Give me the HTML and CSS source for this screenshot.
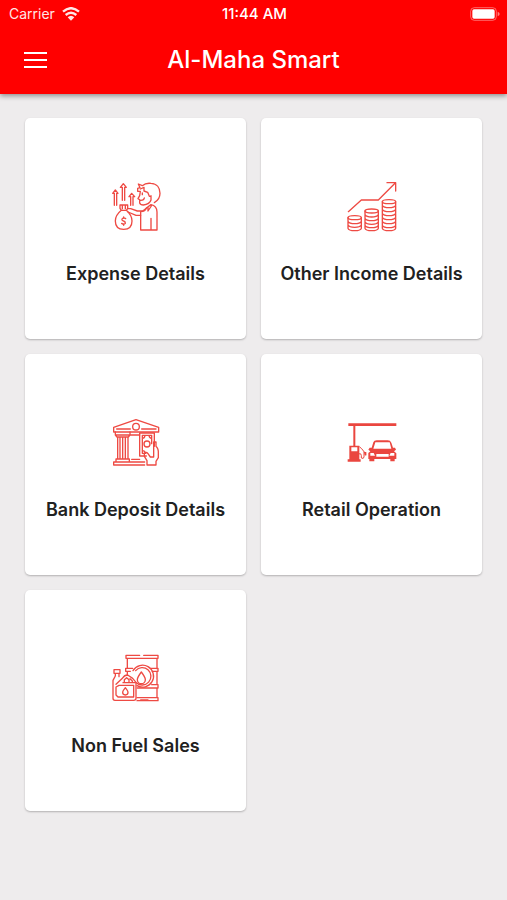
FILE: index.html
```html
<!DOCTYPE html>
<html lang="en">
<head>
<meta charset="utf-8">
<meta name="viewport" content="width=device-width, initial-scale=1">
<title>Al-Maha Smart</title>
<link rel="stylesheet" href="styles.css">
</head>
<body>
<header class="header">
  <div class="status">
    <div class="carrier">
      <span>Carrier</span>
      <svg class="wifi" viewBox="0 0 54 42" aria-hidden="true">
        <path d="M3 14Q27-7 51 14M11 24Q27 10 43 24" fill="none" stroke="currentColor" stroke-width="7"/>
        <path d="M17 31Q27 22 37 31L27 41Z" fill="currentColor"/>
      </svg>
    </div>
    <time class="clock">11:44 AM</time>
    <svg class="battery" viewBox="0 0 90 42" aria-hidden="true">
      <rect x="2" y="2" width="77" height="38" rx="11" fill="none" stroke="currentColor" stroke-width="3" opacity=".4"/>
      <rect x="7" y="7" width="67" height="28" rx="5" fill="currentColor"/>
      <path d="M83 14Q89 17 89 21T83 28Z" fill="currentColor" opacity=".5"/>
    </svg>
  </div>
  <div class="appbar">
    <button class="menu" type="button" aria-label="Menu">
      <svg viewBox="0 0 24 16" aria-hidden="true"><path d="M0 1H23M0 8H23M0 15H23" stroke="currentColor" stroke-width="2"/></svg>
    </button>
    <h1 class="title">Al-Maha Smart</h1>
  </div>
</header>
<main class="grid">
  <a class="card" href="#expense">
    <svg class="icon" viewBox="3 0 210 210" aria-hidden="true">
      <path d="M43 106V70H38L46 60L54 70H50V106M67 91V52H61L70 41L79 52H74V91M92 106V80H87L95 70L104 80H99V106"/>
      <path d="M60 105H83V115L79 121H64L60 115ZM64 121C53 130 46 139 46 153C46 170 56 178 71 178S96 170 96 153C96 140 88 129 79 121M67 106V116M76 106V116M77 146Q70 141 66 147Q65 152 71 153Q77 155 76 160Q72 165 65 160M71 141V145M71 162V166"/>
      <path d="M83 116H92L112 123H128L140 114M84 126L108 136H122"/>
      <path d="M122 180V125Q136 124 139 114L153 104Q171 108 171 126V180ZM153 180V145M122 180H171M144 111V123L154 108"/>
      <path d="M121 64H113V55L120 53L115 42L127 47Q137 38 153 40C171 41 180 54 180 70C180 84 174 92 163 98M121 64L119 77L114 86L119 89V99Q121 105 130 105Q149 103 153 90V77M121 57L132 52V63L143 67L148 79H153M120 91Q132 92 133 84M127 69V74"/>
    </svg>
    <span class="label">Expense Details</span>
  </a>
  <a class="card" href="#income">
    <svg class="icon" viewBox="3 0 210 210" aria-hidden="true">
      <path d="M37 125L76 90H127L177 40M153 38H179V63"/>
      <ellipse cx="56" cy="143" rx="20" ry="6"/>
      <path d="M36 143V175Q38 182 56 182T76 175V143M36 154Q40 161 56 161T76 154M36 165Q40 172 56 172T76 165"/>
      <ellipse cx="107" cy="123" rx="20" ry="6"/>
      <path d="M87 123V175Q89 182 107 182T127 175V123M87 134Q91 141 107 141T127 134M87 145Q91 152 107 152T127 145M87 156Q91 163 107 163T127 156M87 166Q91 173 107 173T127 166"/>
      <ellipse cx="159" cy="95" rx="20" ry="6"/>
      <path d="M139 95V175Q141 182 159 182T179 175V95M139 106Q143 113 159 113T179 106M139 118Q143 125 159 125T179 118M139 130Q143 137 159 137T179 130M139 142Q143 149 159 149T179 142M139 154Q143 161 159 161T179 154M139 166Q143 173 159 173T179 166"/>
    </svg>
    <span class="label">Other Income Details</span>
  </a>
  <a class="card" href="#deposit">
    <svg class="icon" viewBox="3 0 210 210" aria-hidden="true">
      <path d="M41 64L108 41L176 64V78H41ZM50 69H91M125 69H168"/>
      <circle cx="108" cy="62" r="10" fill="#fff"/>
      <path d="M46 78V87H90V78M46 87L51 93H85L90 87M53 94V158M60 94V158M68 94V158M76 94V158M84 94V158M48 159H88V168H48ZM41 177V168H134M41 177H134M88 87H119M95 160H119"/>
      <path d="M119 81H163V121M119 81V150H139M127 88H155V113M127 88V142H137M127 97Q134 97 135 88M147 88Q148 96 155 97M127 134Q135 134 136 142"/>
      <circle cx="141" cy="114" r="9"/>
      <path d="M141 177V164L133 151V143Q138 136 144 143L151 153H161V108H168V121Q176 128 175 143V155L168 166V177Z"/>
    </svg>
    <span class="label">Bank Deposit Details</span>
  </a>
  <a class="card" href="#retail">
    <svg class="icon solid" viewBox="3 0 210 210" aria-hidden="true">
      <path d="M37 52H181V60H58V120H52V60H37Z"/>
      <path fill-rule="evenodd" d="M40 119H70V160H74V167H35V160H40ZM46 124V136H64V124Z"/>
      <path class="line" d="M70 143Q76 141 76 149V156Q83 160 84 153V137L77 128L71 123M84 138L89 142V147"/>
      <path d="M84 138H91V148H86Z"/>
      <path fill-rule="evenodd" d="M112 109Q114 103 122 103H155Q163 103 166 110L171 125H177L180 131L174 136L181 142V159H176V166H163V159H115V166H100V159H97V141L103 136L97 131L101 125H107ZM118 109L112 128H166L161 109ZM103 141V149H117L113 141ZM121 144V152H158V144ZM164 141L160 149H175V141Z"/>
    </svg>
    <span class="label">Retail Operation</span>
  </a>
  <a class="card" href="#nonfuel">
    <svg class="icon" viewBox="3 0 210 210" aria-hidden="true">
      <path d="M119 40H78V49H174V40H131M82 49V79M171 49V80M77 79H98M153 79H174V88H157M77 79V88H91M82 88V99M171 88V128M155 128H174V138H112M171 138V167M111 167H174V176H111M122 174H144"/>
      <path d="M99 86A33 33 0 1 1 111 131M107 86A26 26 0 1 1 109 122"/>
      <path d="M124 90Q112 106 112 113A12 12 0 0 0 136 113Q136 106 124 90Z"/>
      <path d="M42 83H60V94H42ZM46 94V102M57 94V104M46 102L39 115V169Q39 175 45 175H101Q108 175 108 169V121L98 109L83 99Q73 99 68 108L48 127M73 122V113L80 107L87 113V122M90 110L97 117V122M69 122H104M48 135L57 130H101V165H54L48 159ZM48 144V159M61 175H86"/>
      <path d="M76 137Q68 147 68 151A8 8 0 0 0 84 151Q84 147 76 137Z"/>
    </svg>
    <span class="label">Non Fuel Sales</span>
  </a>
</main>
</body>
</html>
```
FILE: styles.css
```css
* {
  box-sizing: border-box;
}

body {
  margin: 0;
  min-height: 100vh;
  background: #eeeced;
  color: #212121;
  font-family: Inter, "Liberation Sans", sans-serif;
}

.header {
  position: relative;
  background: #ff0000;
  color: #fff;
  box-shadow: 0 2px 5px rgba(0, 0, 0, 0.4);
}

.status {
  display: grid;
  grid-template-columns: 1fr auto 1fr;
  align-items: center;
  height: 27px;
  padding: 0 7px 0 9px;
  font-size: 14px;
  line-height: 16px;
}

.carrier {
  display: flex;
  align-items: center;
  gap: 7px;
  opacity: 0.9;
}

.wifi {
  width: 18px;
  height: 14px;
}

.clock {
  font-size: 15px;
  font-weight: 500;
}

.battery {
  width: 30px;
  height: 14px;
  justify-self: end;
}

.appbar {
  display: grid;
  grid-template-columns: 48px 1fr 48px;
  align-items: center;
  height: 67px;
  padding: 0 12px 2px;
}

.menu {
  display: grid;
  place-items: center;
  height: 48px;
  padding: 0;
  border: 0;
  background: none;
  color: inherit;
}

.menu svg {
  width: 24px;
  height: 16px;
}

.title {
  margin: 0;
  font-size: 24px;
  font-weight: 500;
  line-height: 32px;
  text-align: center;
}

.grid {
  display: grid;
  grid-template-columns: repeat(2, 1fr);
  gap: 15px;
  padding: 24px 25px;
}

.card {
  display: flex;
  flex-direction: column;
  align-items: center;
  justify-content: center;
  gap: 24px;
  aspect-ratio: 1;
  padding-bottom: 4px;
  border-radius: 5px;
  background: #fff;
  box-shadow: 0 1px 2px rgba(0, 0, 0, 0.25);
  color: inherit;
  text-decoration: none;
}

.icon {
  width: 70px;
  height: 70px;
  fill: none;
  stroke: #ee4a43;
  stroke-width: 4;
  stroke-linecap: round;
  stroke-linejoin: round;
}

.solid {
  fill: #ea463f;
  stroke: none;
}

.line {
  fill: none;
  stroke: #ea463f;
  stroke-width: 3;
}

.label {
  font-size: 18px;
  font-weight: 600;
  line-height: 20px;
  white-space: nowrap;
}
```
